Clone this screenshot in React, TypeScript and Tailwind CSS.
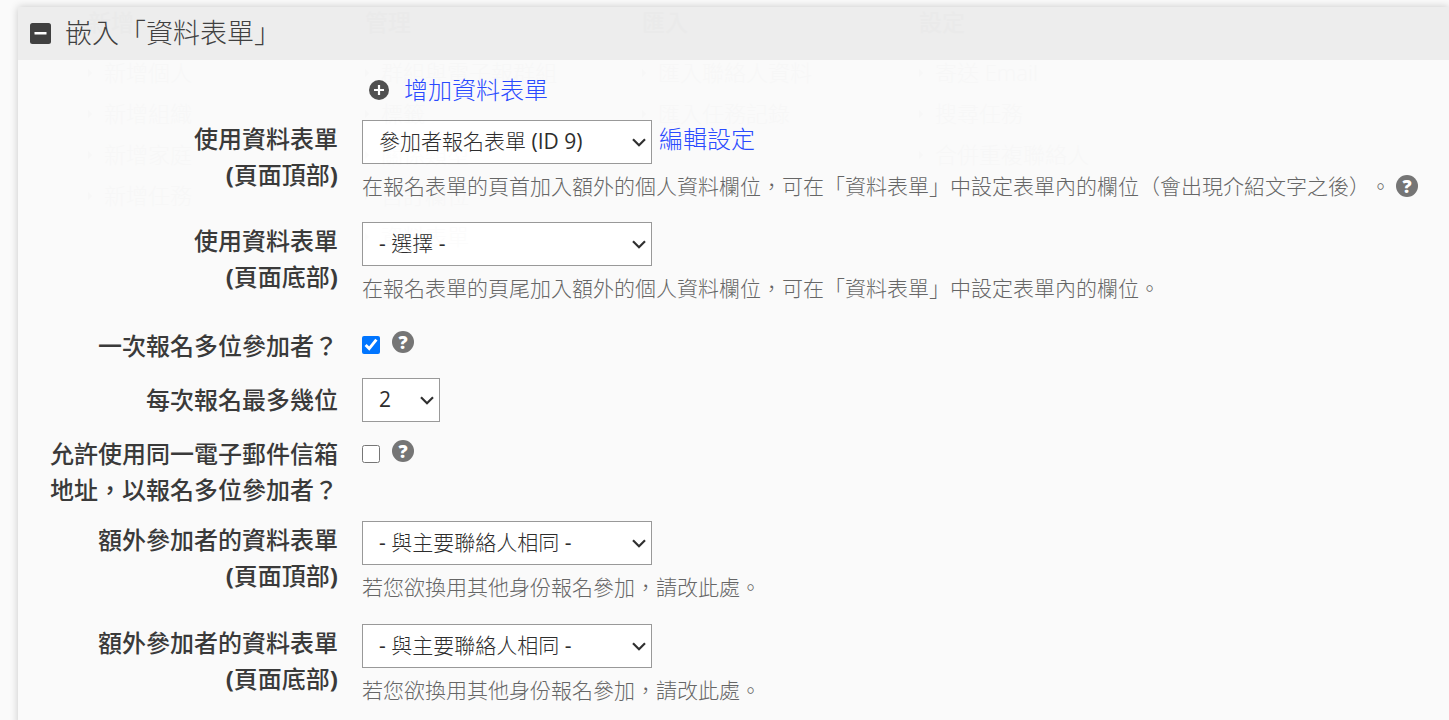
import type { ReactNode } from "react";

type Option = { value: string; label: string };

const menuColumns = [
  { title: "新增", items: ["新增個人", "新增組織", "新增家庭", "新增任務"] },
  { title: "管理", items: ["群組與電子報群組", "標籤", "關係類型", "自訂欄位", "資料表單"] },
  { title: "匯入", items: ["匯入聯絡人資料", "匯入任務記錄"] },
  { title: "設定", items: ["寄送 Email", "搜尋任務", "合併重複聯絡人"] },
];

const sameAsContact: Option[] = [{ value: "", label: "- 與主要聯絡人相同 -" }];

function SelectBox({ id, options, className }: { id: string; options: Option[]; className: string }) {
  return (
    <span className={`relative inline-flex shrink-0 ${className}`}>
      <select
        id={id}
        className="h-11 w-full appearance-none border border-[#999] bg-white pl-4 pr-8 font-['Open_Sans','Noto_Sans_CJK_TC_Light','Noto_Sans_CJK_TC',sans-serif] text-[21px] text-[#2d2d2d]"
      >
        {options.map((o) => (
          <option key={o.label} value={o.value}>
            {o.label}
          </option>
        ))}
      </select>
      <svg
        viewBox="0 0 14 9"
        className="pointer-events-none absolute right-[6px] top-[18px] h-[9px] w-[14px]"
        fill="none"
        stroke="#303030"
        strokeWidth="2.2"
      >
        <path d="M1 1.2 7 7.2 13 1.2" />
      </svg>
    </span>
  );
}

function HelpButton() {
  return (
    <button
      type="button"
      aria-label="說明"
      className="flex size-[22px] shrink-0 items-center justify-center rounded-full bg-[#757575] text-lg leading-[22px] font-extrabold text-white"
    >
      ?
    </button>
  );
}

function MinusIcon() {
  return (
    <svg viewBox="0 0 21 21" className="size-[21px]">
      <rect width="21" height="21" rx="2.5" fill="#404040" />
      <rect x="4.5" y="9" width="12" height="2.6" rx="0.4" fill="#fff" />
    </svg>
  );
}

function PlusIcon() {
  return (
    <svg viewBox="0 0 20 20" className="size-5">
      <circle cx="10" cy="10" r="10" fill="#505050" />
      <path d="M10 5v10M5 10h10" stroke="#fff" strokeWidth="2.2" />
    </svg>
  );
}

type RowProps = {
  id: string;
  label: string;
  position?: string;
  children: ReactNode;
  className: string;
  labelClass?: string;
};

function Row({ id, label, position, children, className, labelClass = "pt-px" }: RowProps) {
  return (
    <div className={`flex gap-6 ${className}`}>
      <label
        htmlFor={id}
        className={`w-[320px] shrink-0 pl-8 text-right text-2xl leading-9 font-medium text-[#3a3a3a] ${labelClass}`}
      >
        {label}
        {position && (
          <span className="block">
            <b>(</b>
            {position}
            <b>)</b>
          </span>
        )}
      </label>
      <div className="min-w-0 flex-1">{children}</div>
    </div>
  );
}

function Description({ children }: { children: ReactNode }) {
  return (
    <p className="text-[21px] leading-[30px] font-light text-[#666] [text-spacing-trim:space-all]">{children}</p>
  );
}

// navigation menu on its way out, barely visible over the form
function FadingMenu() {
  return (
    <div className="pointer-events-none absolute left-[88px] top-1 flex opacity-[0.008]" aria-hidden="true">
      {menuColumns.map((col) => (
        <div key={col.title} className="w-[277px] shrink-0">
          <div className="mb-3 text-[23px] leading-9 font-medium">{col.title}</div>
          <ul>
            {col.items.map((item) => (
              <li key={item} className="flex items-center gap-3 text-[22px] leading-[41px] font-light">
                <span className="border-y-4 border-l-4 border-y-transparent border-l-black" />
                {item}
              </li>
            ))}
          </ul>
        </div>
      ))}
    </div>
  );
}

export default function App() {
  return (
    <main className="relative min-h-screen overflow-hidden bg-[#fafafa] pt-[7px] pl-[18px] font-['Open_Sans','Noto_Sans_CJK_TC',sans-serif]">
      <section className="min-h-screen bg-[#fafafa] shadow-[0_0_8px_rgba(0,0,0,0.2)]">
        <h2>
          <button
            type="button"
            className="flex h-[53px] w-full items-center gap-[14px] bg-[#ededed] pl-3 text-left text-[27px] font-light text-[#404040]"
          >
            <MinusIcon />
            嵌入「資料表單」
          </button>
        </h2>

        <div className="flex h-[60px] items-center gap-[15px] pl-[351px]">
          <PlusIcon />
          <a href="#add" className="text-2xl font-light text-[#2a4bff]">
            增加資料表單
          </a>
        </div>

        <Row id="profile-top" className="h-[102px]" label="使用資料表單" position="頁面頂部">
          <div className="mb-[7px] flex gap-[7px]">
            <SelectBox id="profile-top" className="w-[290px]" options={[{ value: "9", label: "參加者報名表單 (ID 9)" }]} />
            <a href="#edit" className="pt-px text-2xl leading-9 font-light text-[#2a4bff]">
              編輯設定
            </a>
          </div>
          <div className="flex items-center gap-[5px]">
            <Description>
              在報名表單的頁首加入額外的個人資料欄位，可在「資料表單」中設定表單內的欄位（會出現介紹文字之後）。
            </Description>
            <HelpButton />
          </div>
        </Row>

        <Row id="profile-bottom" className="h-[105px]" label="使用資料表單" position="頁面底部">
          <div className="mb-[7px]">
            <SelectBox id="profile-bottom" className="w-[290px]" options={[{ value: "", label: "- 選擇 -" }]} />
          </div>
          <Description>在報名表單的頁尾加入額外的個人資料欄位，可在「資料表單」中設定表單內的欄位。</Description>
        </Row>

        <Row id="multiple" className="h-[51px]" label="一次報名多位參加者？">
          <div className="flex items-start gap-3 pt-1">
            <input id="multiple" type="checkbox" defaultChecked className="mt-[5px] size-[18px]" />
            <HelpButton />
          </div>
        </Row>

        <Row id="max" className="h-[58px]" labelClass="pt-1" label="每次報名最多幾位">
          <SelectBox id="max" className="w-[78px]" options={[{ value: "2", label: "2" }]} />
        </Row>

        <Row id="same-email" className="h-[85px]" labelClass="pt-0" label="允許使用同一電子郵件信箱地址，以報名多位參加者？">
          <div className="flex items-start gap-3 pt-1">
            <input id="same-email" type="checkbox" className="mt-[5px] size-[18px]" />
            <HelpButton />
          </div>
        </Row>

        <Row id="extra-top" className="h-[103px]" label="額外參加者的資料表單" position="頁面頂部">
          <div className="mb-[7px]">
            <SelectBox id="extra-top" className="w-[290px]" options={sameAsContact} />
          </div>
          <Description>若您欲換用其他身份報名參加，請改此處。</Description>
        </Row>

        <Row id="extra-bottom" className="h-[103px]" label="額外參加者的資料表單" position="頁面底部">
          <div className="mb-[7px]">
            <SelectBox id="extra-bottom" className="w-[290px]" options={sameAsContact} />
          </div>
          <Description>若您欲換用其他身份報名參加，請改此處。</Description>
        </Row>
      </section>
      <FadingMenu />
    </main>
  );
}
